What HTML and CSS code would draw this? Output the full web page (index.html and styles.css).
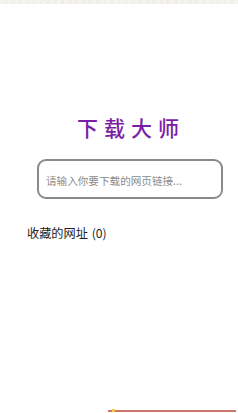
FILE: index.html
```html
<!DOCTYPE html>
<html lang="zh">
<head>
<meta charset="utf-8">
<link rel="stylesheet" href="styles.css">
</head>
<body>
<div class="screen">
  <div class="topstrip"></div>
  <h1 class="title">下载大师</h1>
  <div class="search"><span class="placeholder">请输入你要下载的网页链接...</span></div>
  <div class="fav">收藏的网址 (0)</div>
  <div class="bottomline"><span class="dot"></span></div>
</div>
</body>
</html>
```
FILE: styles.css
```css
html, body {
  margin: 0;
  padding: 0;
  background: #ffffff;
}
.screen {
  position: relative;
  width: 238px;
  height: 413px;
  overflow: hidden;
  font-family: "Noto Sans CJK SC", "Noto Sans", sans-serif;
  display: flex;
  flex-direction: column;
}
.topstrip {
  height: 4px;
  background-color: #f6f4f1;
  background-image: repeating-linear-gradient(45deg, #efece8 0 1px, transparent 1px 5px),
                    repeating-linear-gradient(-45deg, #efece8 0 1px, transparent 1px 5px);
}
.title {
  margin: 108px 0 0 77px;
  font-size: 21px;
  line-height: 30px;
  font-weight: 500;
  letter-spacing: 6px;
  color: #7a1ea6;
}
.search {
  margin: 17px 15px 0 37px;
  height: 36px;
  border: 2px solid #8a8a8a;
  border-radius: 9px;
  display: flex;
  align-items: center;
  padding-left: 7px;
}
.placeholder {
  font-size: 10.6px;
  color: #8c8c8c;
  position: relative;
  top: 1px;
}
.fav {
  margin: 26px 0 0 27px;
  font-size: 12.2px;
  line-height: 16px;
  color: #222222;
  word-spacing: 1px;
}
.bottomline {
  position: absolute;
  left: 108px;
  right: 2px;
  bottom: 1px;
  height: 2px;
  background: #c9766c;
}
.dot {
  position: absolute;
  left: 4px;
  top: -1px;
  width: 3px;
  height: 3px;
  background: #f2c94c;
}
```
